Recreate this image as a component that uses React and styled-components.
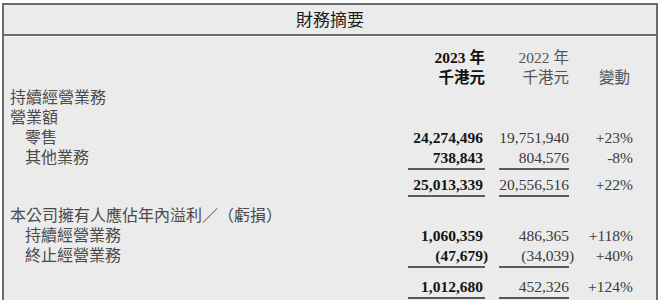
import React from 'react';
import styled, { createGlobalStyle } from 'styled-components';

const GlobalStyle = createGlobalStyle`
  html, body {
    margin: 0;
    padding: 0;
    background: #ffffff;
  }
  body {
    font-family: "Liberation Serif", "Noto Sans CJK TC", serif;
  }
`;

const rows = [
    { label: '持續經營業務', indent: 0 },
    { label: '營業額', indent: 0 },
    { label: '零售', indent: 1, values: ['24,274,496', '19,751,940', '+23%'] },
    { label: '其他業務', indent: 1, values: ['738,843', '804,576', '-8%'], rule: true },
    { total: true, values: ['25,013,339', '20,556,516', '+22%'], rule: true, top: 5 },
    { label: '本公司擁有人應佔年內溢利／（虧損）', indent: 0, gap: 9 },
    { label: '持續經營業務', indent: 1, values: ['1,060,359', '486,365', '+118%'] },
    { label: '終止經營業務', indent: 1, values: ['(47,679)', '(34,039)', '+40%'], rule: true },
    { total: true, values: ['1,012,680', '452,326', '+124%'], rule: true, top: 9 },
];

export default function App() {
    return (
        <>
            <GlobalStyle />
            <Page>
                <Box>
                    <Title>財務摘要</Title>
                    <Body>
                        <Row>
                            <Label />
                            <Head $bold>2023 年</Head>
                            <Head>2022 年</Head>
                            <Head />
                        </Row>
                        <Row>
                            <Label />
                            <Head $bold>千港元</Head>
                            <Head>千港元</Head>
                            <Head $pad={3}>變動</Head>
                        </Row>
                        {rows.map((row, i) => (
                            <Row key={i} $top={row.top} $gap={row.gap}>
                                <Label $indent={row.indent}>{row.label}</Label>
                                {row.values ? (
                                    <>
                                        <Num $bold $rule={row.rule} $pad={2}>
                                            <Value $neg={row.values[0].startsWith('(')}>{row.values[0]}</Value>
                                        </Num>
                                        <Num $rule={row.rule}>
                                            <Value $neg={row.values[1].startsWith('(')}>{row.values[1]}</Value>
                                        </Num>
                                        <Num>{row.values[2]}</Num>
                                    </>
                                ) : (
                                    <>
                                        <Num />
                                        <Num />
                                        <Num />
                                    </>
                                )}
                            </Row>
                        ))}
                    </Body>
                </Box>
            </Page>
        </>
    );
}

const Page = styled.div`
  padding: 3px 2px 0 2px;
`;

const Box = styled.div`
  border: 2px solid #6c6c6c;
  border-bottom: none;
  background: #ebebeb;
  height: 297px;
  box-sizing: border-box;
`;

const Title = styled.div`
  height: 31px;
  box-sizing: border-box;
  padding-top: 5px;
  text-align: center;
  font-size: 17px;
  line-height: 22px;
  color: #1e1e1e;
  border-bottom: 2px solid #6c6c6c;
  box-shadow: 0 1px 0 #f8f8f8;
`;

const Body = styled.div`
  padding: 12px 23px 0 6px;
`;

const Row = styled.div`
  display: grid;
  grid-template-columns: 1fr 77px 70px 50px;
  column-gap: 14px;
  align-items: start;
  line-height: 20px;
  padding-top: ${(p) => p.$top || 0}px;
  margin-top: ${(p) => p.$gap || 0}px;
`;

const Label = styled.div`
  font-size: 16px;
  color: #4a4a4a;
  padding-left: ${(p) => (p.$indent ? 15 : 0)}px;
  white-space: nowrap;
  min-height: 20px;
`;

const Head = styled.div`
  text-align: right;
  font-size: 15.5px;
  font-weight: ${(p) => (p.$bold ? 700 : 400)};
  color: ${(p) => (p.$bold ? '#111' : '#555')};
  padding-right: ${(p) => p.$pad || 0}px;
  white-space: nowrap;
`;

const Num = styled.div`
  text-align: right;
  font-size: 15.5px;
  font-weight: ${(p) => (p.$bold ? 700 : 400)};
  color: ${(p) => (p.$bold ? '#141414' : '#3a3a3a')};
  padding-right: ${(p) => p.$pad || 0}px;
  border-bottom: ${(p) => (p.$rule ? '2px solid #5a5a5a' : 'none')};
  white-space: nowrap;
  min-height: 20px;
`;

const Value = styled.span`
  margin-right: ${(p) => (p.$neg ? '-0.34em' : '0')};
`;
